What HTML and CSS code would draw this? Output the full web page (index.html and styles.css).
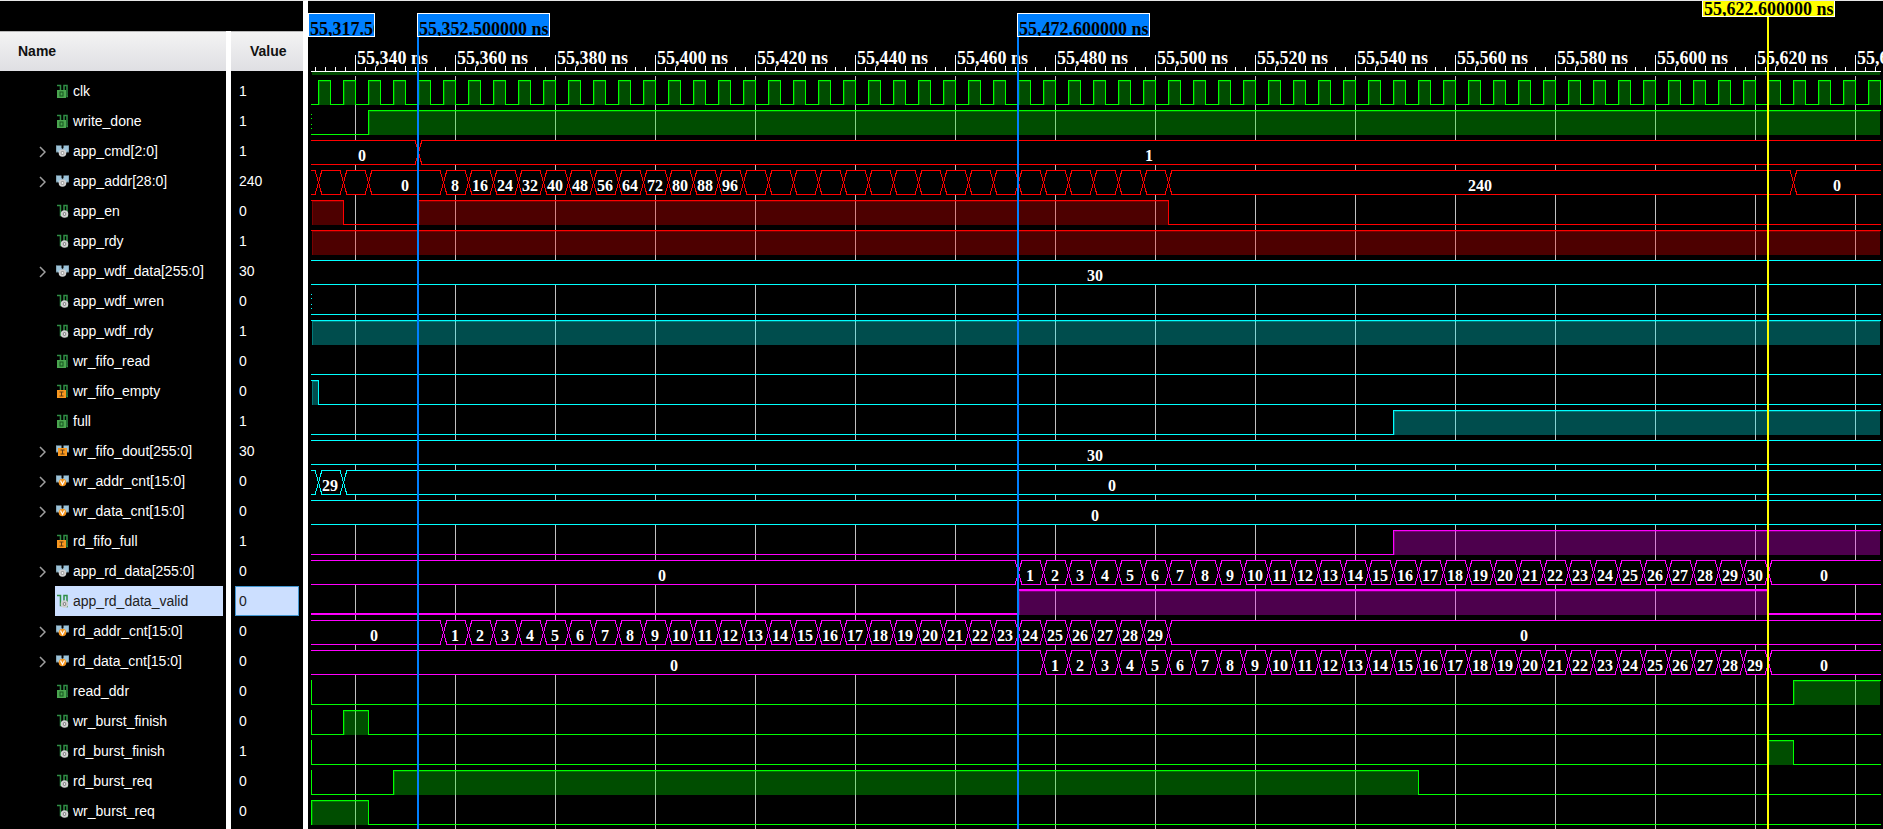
FILE: index.html
```html
<!DOCTYPE html>
<html lang="en">
<head>
<meta charset="utf-8">
<title>Waveform viewer</title>
<link rel="stylesheet" href="styles.css">
</head>
<body>
<svg class="defs" aria-hidden="true">
  <symbol id="wave" viewBox="0 0 13 14">
    <path d="M1 1.5H4.5V11.500H8V1.500H11V12.500H12" fill="none" stroke="#2f8f45" stroke-width="1.500"/>
  </symbol>
  <symbol id="wings" viewBox="0 0 13 14">
    <path d="M0 1.500H5.500V4L6.500 5L7.500 4V1.500H13V8H11L9 10H4L2 8H0Z" fill="#9cc3d9"/>
    <path d="M0 1.500V8H2M13 1.500V8H11" fill="none" stroke="#6f8794"/>
    <path d="M5 7L6.500 5L8 7" fill="none" stroke="#31566b"/>
  </symbol>
  <symbol id="icon-net-port" viewBox="0 0 13 14">
    <use href="#wave" width="13" height="14"/>
    <rect x="1" y="6" width="9" height="8" fill="#4aa64f"/>
    <rect x="4" y="8" width="3" height="4" fill="none" stroke="#14501e"/>
  </symbol>
  <symbol id="icon-net-in" viewBox="0 0 13 14">
    <use href="#wave" width="13" height="14"/>
    <rect x="1" y="6" width="9" height="8" fill="#f7971f"/>
    <path d="M3.500 8H7.500M5.500 8V12M3.500 12H7.500" fill="none" stroke="#5c3a12"/>
  </symbol>
  <symbol id="icon-net" viewBox="0 0 13 14">
    <use href="#wave" width="13" height="14"/>
    <circle cx="8.500" cy="10" r="2.800" fill="#6a6a6a" stroke="#d0d0d0" stroke-width="2"/>
    <circle cx="8.500" cy="10" r="1" fill="#f0f0f0"/>
  </symbol>
  <symbol id="icon-bus" viewBox="0 0 13 14">
    <use href="#wings" width="13" height="14"/>
    <circle cx="6.500" cy="9" r="2.800" fill="#6a6a6a" stroke="#d0d0d0" stroke-width="2"/>
    <circle cx="6.500" cy="9" r="1.200" fill="#f0f0f0"/>
  </symbol>
  <symbol id="icon-bus-in" viewBox="0 0 13 14">
    <use href="#wings" width="13" height="14"/>
    <rect x="2" y="4" width="9" height="8" fill="#f7971f"/>
    <path d="M4.500 6H8.500M6.500 6V10M4.500 10H8.500" fill="none" stroke="#5c3a12"/>
  </symbol>
  <symbol id="icon-bus-var" viewBox="0 0 13 14">
    <use href="#wings" width="13" height="14"/>
    <circle cx="6.500" cy="8.500" r="3.800" fill="#f7971f"/>
    <path d="M4.500 6.500L6.500 10.500L8.500 6.500" fill="none" stroke="#fff" stroke-width="1.200"/>
  </symbol>
  <symbol id="icon-chevron" viewBox="0 0 7 12">
    <path d="M1 1L6 6L1 11" fill="none" stroke="#a0a0a0" stroke-width="1.500"/>
  </symbol>
</svg>
<main class="viewer">
  <section class="signals">
    <table class="signal-table">
      <thead><tr><th class="name-col">Name</th><th class="value-col">Value</th></tr></thead>
      <tbody id="signal-rows"></tbody>
    </table>
  </section>
  <section class="scope" id="scope" aria-label="Waveforms">
    <svg class="ruler" id="ruler"></svg>
    <svg class="plot" id="plot"></svg>
    <div id="cursors"></div>
  </section>
</main>
<script src="app.js"></script>
</body>
</html>
```
FILE: styles.css
```css
* { box-sizing: border-box; }

body {
  margin: 0;
  background: #000;
  color: #fff;
  font-family: "Liberation Sans", Arial, sans-serif;
  font-size: 14px;
}

.defs { position: absolute; width: 0; height: 0; }

.viewer {
  display: flex;
  height: 100vh;
  overflow: hidden;
}

/* Signal list */
.signals {
  flex: none;
  width: 308px;
  padding-top: 30px;
  border-top: 1px solid #e6e6e6;
  border-right: 5px solid #fff;
  background: linear-gradient(to right, #000 226px, #fff 226px, #fff 231px, #000 231px) 0 30px no-repeat;
}

.signal-table {
  width: 100%;
  table-layout: fixed;
  border-collapse: separate;
  border-spacing: 0;
}

.signal-table th {
  height: 45px;
  padding: 0 0 5px;
  text-align: left;
  color: #111;
  background: linear-gradient(#f4f4f4, #dfdfe3) 0 0 / 100% 40px no-repeat;
}

.signal-table th.name-col {
  width: 231px;
  padding-left: 18px;
  border-right: 5px solid #fff;
  box-shadow: inset 0 1px #b8b8b8;
}

.signal-table th.value-col {
  padding-left: 19px;
  box-shadow: inset 0 1px #b8b8b8;
}

.signal-table td { height: 30px; padding: 0; }

.name-cell {
  display: grid;
  grid-template-columns: 20px 1fr;
  height: 30px;
  padding-left: 35px;
  padding-right: 8px;
}

.expand {
  display: flex;
  align-items: center;
  padding: 1px 0 0 4px;
  border: 0;
  background: none;
}

.expand svg { width: 7px; height: 12px; }

.signal {
  grid-column: 2;
  display: flex;
  align-items: center;
  gap: 4px;
  padding-left: 1px;
  white-space: nowrap;
}

.signal svg { flex: none; width: 13px; height: 14px; }

.value {
  display: flex;
  align-items: center;
  height: 30px;
  margin: 0 4px;
  padding-left: 3px;
  border: 1px solid transparent;
}

.selected .signal { background: #ccdfff; color: #222; }
.selected .value { background: #ccdfff; border-color: #4296d0; color: #222; }

/* Waveform pane */
.scope {
  position: relative;
  flex: 1;
  min-width: 0;
  display: flex;
  flex-direction: column;
  overflow: hidden;
  border-top: 1px solid #e6e6e6;
  font-family: "Liberation Serif", "Times New Roman", serif;
  font-weight: bold;
}

.ruler { flex: none; width: 100%; height: 75px; }
.plot { flex: 1; width: 100%; min-height: 0; }

.ruler text { fill: #fff; font-size: 18px; }
.plot text { fill: #fff; font-size: 16px; text-anchor: middle; }
.ruler rect, .plot rect { shape-rendering: crispEdges; }
.tick { fill: #fff; }
.activity { fill: #004b00; }
.grid { fill: #c0c0c0; }

.green { color: #0f0; }
.red { color: #f00; }
.cyan { color: #0ff; }
.magenta { color: #f0f; }

.line { fill: currentColor; }
.fill { fill: currentColor; opacity: 0.3; }
.glow { fill: currentColor; opacity: 0.25; }
.bus-body { fill: #000; }
.cross { fill: none; stroke: currentColor; stroke-width: 1; shape-rendering: crispEdges; }

.cursor {
  position: absolute;
  top: 12px;
  bottom: 0;
  width: 2px;
  background: #0080ff;
}

.flag {
  position: absolute;
  top: 12px;
  height: 24px;
  padding: 5px 0 0 1px;
  overflow: hidden;
  border: 1px solid #fff;
  background: #0080ff;
  color: #000;
  font-size: 18px;
  line-height: 20px;
  white-space: nowrap;
}

.cursor.main { top: 0; background: #ff0; }
.flag.main { top: 0; height: 16px; padding-top: 0; border-top: 0; background: #ff0; line-height: 17px; }
```
FILE: app.js
```js
const PX_PER_NS = 5;
const ORIGIN_NS = 330.6;   // time at the pane's left edge, after 55,000 ns
const LEFT = 3;
const RIGHT_MARGIN = 2;
const ROW = 30;
const HIGH = 4;
const LOW = 28;

const x = t => Math.round((t - ORIGIN_NS) * PX_PER_NS);

// One bus value per 5 ns clock period, starting at time t
const count = (t, n, step = 1) =>
  Array.from({ length: n }, (_, i) => [t + i * 5, String((i + 1) * step)]);

const START = 330.2;
const VIEW_START = 331;
const bit = (start, ...edges) => ({ start, edges });
const bus = (...segments) => ({ segments });

const clockEdges = [];
for (let t = 332.6; t < 1000; t += 5) clockEdges.push(t, t + 2.4);

const signals = [
  ['clk', '1', 'net-port', 'green', bit(0, ...clockEdges)],
  ['write_done', '1', 'net-port', 'green', { ...bit(0, 342.6), lead: 'dots' }],
  ['app_cmd[2:0]', '1', 'bus', 'red', bus([START, '0'], [352.6, '1'])],
  ['app_addr[28:0]', '240', 'bus', 'red', bus([327.6, ''], [332.6, ''], [337.6, ''], [342.6, '0'],
    ...count(357.6, 29, 8), [502.6, '240'], [627.6, '0'])],
  ['app_en', '0', 'net', 'red', bit(1, 337.6, 352.6, 502.6)],
  ['app_rdy', '1', 'net', 'red', bit(1)],
  ['app_wdf_data[255:0]', '30', 'bus', 'cyan', bus([VIEW_START, '30'])],
  ['app_wdf_wren', '0', 'net', 'cyan', { ...bit(0), lead: 'dots' }],
  ['app_wdf_rdy', '1', 'net', 'cyan', bit(1)],
  ['wr_fifo_read', '0', 'net-port', 'cyan', bit(0)],
  ['wr_fifo_empty', '0', 'net-in', 'cyan', bit(1, 332.6)],
  ['full', '1', 'net-port', 'cyan', bit(0, 547.6)],
  ['wr_fifo_dout[255:0]', '30', 'bus-in', 'cyan', bus([VIEW_START, '30'])],
  ['wr_addr_cnt[15:0]', '0', 'bus-var', 'cyan', bus([327.6, ''], [332.6, '29'], [337.6, '0'])],
  ['wr_data_cnt[15:0]', '0', 'bus-var', 'cyan', bus([VIEW_START, '0'])],
  ['rd_fifo_full', '1', 'net-in', 'magenta', bit(0, 547.6)],
  ['app_rd_data[255:0]', '0', 'bus', 'magenta', bus([START, '0'], ...count(472.6, 30), [622.6, '0'])],
  ['app_rd_data_valid', '0', 'net', 'magenta', { ...bit(0, 472.6, 622.6), selected: true }],
  ['rd_addr_cnt[15:0]', '0', 'bus-var', 'magenta', bus([START, '0'], ...count(357.6, 29), [502.6, '0'])],
  ['rd_data_cnt[15:0]', '0', 'bus-var', 'magenta', bus([START, '0'], ...count(477.6, 29), [622.6, '0'])],
  ['read_ddr', '0', 'net-port', 'green', { ...bit(0, 627.6), lead: 'solid' }],
  ['wr_burst_finish', '0', 'net', 'green', { ...bit(0, 337.6, 342.6), lead: 'solid' }],
  ['rd_burst_finish', '1', 'net', 'green', { ...bit(0, 622.6, 627.6), lead: 'solid' }],
  ['rd_burst_req', '0', 'net', 'green', { ...bit(0, 347.6, 552.6), lead: 'solid' }],
  ['wr_burst_req', '0', 'net', 'green', { ...bit(1, 342.6), lead: 'solid' }]
];

const cursors = [
  { t: 317.6, label: '55,317.500000 ns' },
  { t: 352.6, label: '55,352.500000 ns' },
  { t: 472.6, label: '55,472.600000 ns' },
  { t: 622.6, label: '55,622.600000 ns', main: true }
];
const FLAG_WIDTH = 133;

const rect = (cls, left, top, w, h) =>
  w > 0 ? `<rect class="${cls}" x="${left}" y="${top}" width="${w}" height="${h}"/>` : '';

function drawBit(wave, top, end) {
  const thick = wave.selected ? 2 : 1;
  const high = top + HIGH - (thick - 1);
  const low = top + LOW - (thick - 1);
  let out = '';
  let level = wave.start;
  let from = LEFT;
  if (wave.lead === 'dots') {
    for (const y of [8, 12, 18, 22]) out += rect('line', LEFT, top + y, 1, 1);
  } else if (wave.lead) {
    out += rect('line', LEFT, high, 1, LOW - HIGH + 1);
  }
  for (const t of [...wave.edges, null]) {
    const to = t === null ? end : Math.min(x(t), end);
    if (level) {
      const fillEnd = to === end ? end - 1 : to;
      out += rect('fill', from + 1, high + thick, fillEnd - from - 1, top + LOW + 1 - high - thick);
      out += rect('glow', from + 1, high + thick, fillEnd - from - 1, 1);
      out += rect('glow', from + 1, high + thick + 1, 1, LOW - HIGH - 1);
    }
    out += rect('line', from, level ? high : low, to - from, thick);
    if (to >= end) break;
    out += rect('line', to, high, 1, LOW - HIGH + thick);
    from = to;
    level = level ? 0 : 1;
  }
  return out;
}

function drawBus(wave, top, end) {
  const high = top + HIGH;
  const low = top + LOW;
  let out = rect('bus-body', LEFT, high, end - LEFT, LOW - HIGH + 1);
  wave.segments.forEach(([t, label], i) => {
    const start = x(t);
    const next = wave.segments[i + 1];
    const stop = next ? x(next[0]) : end;
    const from = start > LEFT ? start + 4 : LEFT;
    const to = next ? stop - 3 : end;
    out += rect('line', from, high, to - from, 1) + rect('line', from, low, to - from, 1);
    if (next) {
      out += `<path class="cross" d="M${stop - 3} ${high}L${stop + 4} ${low + 1}M${stop + 4} ${high}L${stop - 3} ${low + 1}"/>`;
    }
    if (label.length * 8 + 8 < stop - start) {
      out += `<text x="${Math.floor((start + stop) / 2)}" y="${top + 25}">${label}</text>`;
    }
  });
  return out;
}

function render() {
  const width = document.getElementById('scope').clientWidth;
  const end = width - RIGHT_MARGIN;
  const lastNs = ORIGIN_NS + end / PX_PER_NS;

  let ruler = rect('tick', LEFT, 70, end - LEFT, 1) + rect('activity', LEFT + 1, 71, end - LEFT - 2, 3);
  let plot = '';
  for (let t = 332; t < lastNs; t += 2) {
    const major = t % 20 === 0;
    const h = major ? 16 : t % 10 === 0 ? 5 : 4;
    ruler += rect('tick', x(t), 70 - h, 1, h);
    if (major) {
      ruler += `<text x="${x(t) + 2}" y="63">55,${t} ns</text>`;
      plot += rect('grid', x(t), 0, 1, '100%');
    }
  }
  signals.forEach(([, , , color, wave], i) => {
    const draw = wave.segments ? drawBus : drawBit;
    plot += `<g class="${color}">${draw(wave, i * ROW, end)}</g>`;
  });
  document.getElementById('ruler').innerHTML = ruler;
  document.getElementById('plot').innerHTML = plot;

  document.getElementById('cursors').innerHTML = cursors.map(c => {
    const line = x(c.t) - 1;
    const flag = c.main ? line - 65 : line;
    const left = Math.max(flag, 0);
    const cls = c.main ? ' main' : '';
    return (line >= 0 ? `<div class="cursor${cls}" style="left:${line}px"></div>` : '') +
      `<div class="flag${cls}" style="left:${left}px;width:${flag + FLAG_WIDTH - left}px">${c.label}</div>`;
  }).join('');
}

document.getElementById('signal-rows').innerHTML = signals.map(([name, value, icon, , wave]) => `
  <tr${wave.selected ? ' class="selected"' : ''}>
    <td><div class="name-cell">
      ${wave.segments ? `<button class="expand" type="button" aria-label="Expand ${name}"><svg><use href="#icon-chevron"/></svg></button>` : ''}
      <span class="signal"><svg aria-hidden="true"><use href="#icon-${icon}"/></svg>${name}</span>
    </div></td>
    <td><div class="value">${value}</div></td>
  </tr>`).join('');

render();
window.addEventListener('resize', render);
```
